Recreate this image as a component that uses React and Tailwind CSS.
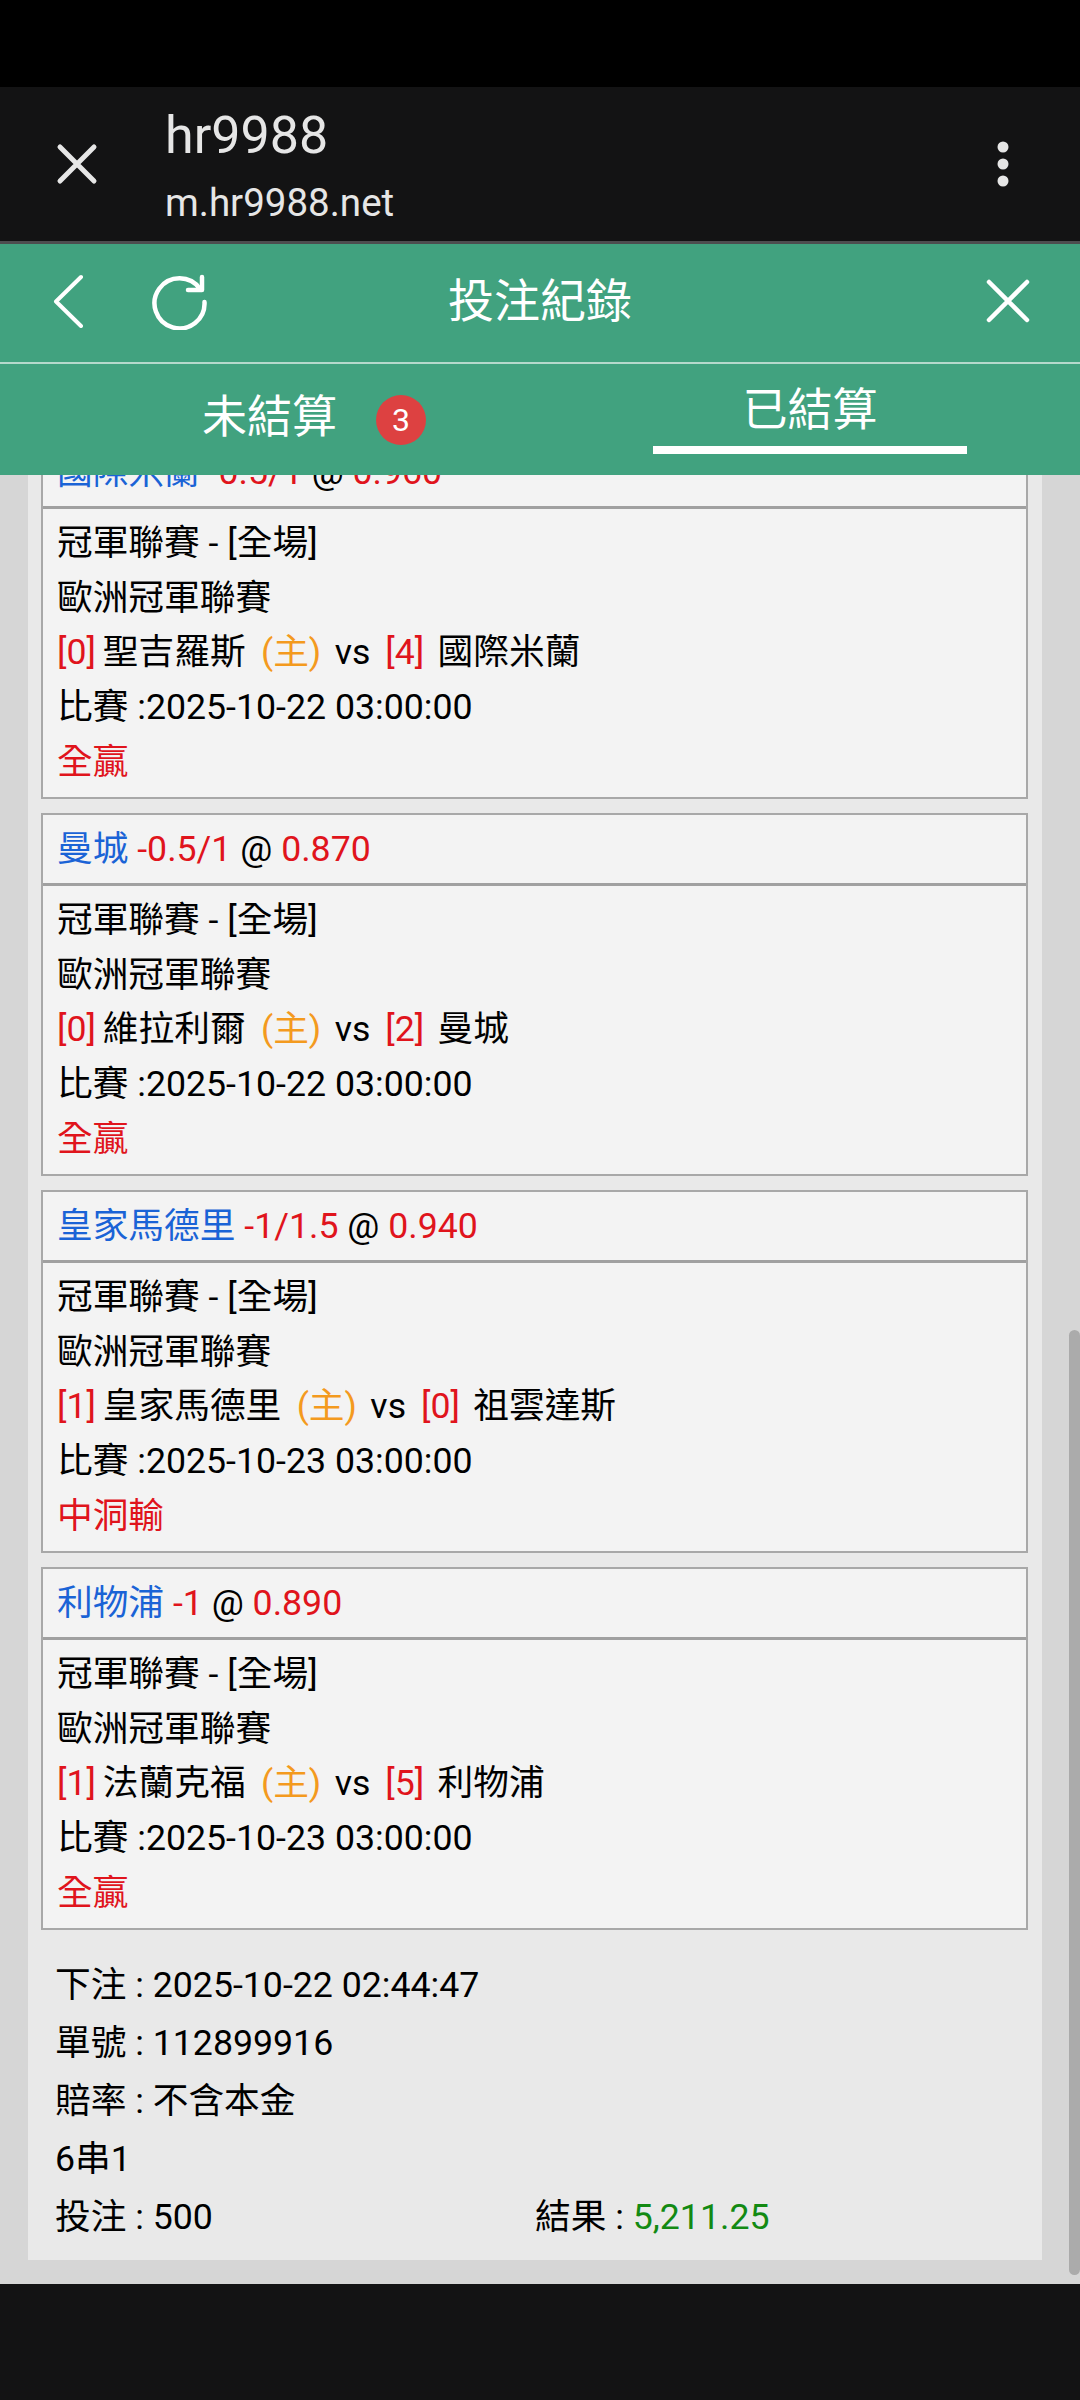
const Card = ({ team, hcp, odds, hs, h, as, a, date, result, className = "" }) => (
  <div className={`border-2 border-[#a8a8a8] bg-[#f3f3f3] ${className}`}>
    <div className="h-[71px] border-b-[3px] border-[#a0a0a0] px-[14px] pt-[7px] leading-[55px]">
      <span className="text-[#1a63d6]">{team}</span> <span className="text-[#e0141c]">{hcp}</span> @ <span className="text-[#e0141c]">{odds}</span>
    </div>
    <div className="px-[14px] pb-[7.5px] pt-[7px] leading-[54.7px]">
      <div>冠軍聯賽 - [全場]</div>
      <div>歐洲冠軍聯賽</div>
      <div>
        <span className="text-[#e0141c]">[{hs}]</span> <span className="ml-[-2px]">{h}</span> <span className="ml-[6.5px] mr-[1.5px] text-[#f39a1e]">(主)</span> <span className="ml-[3px] mr-[6px]">vs</span> <span className="mr-[4.5px] text-[#e0141c]">[{as}]</span> {a}
      </div>
      <div>比賽 :{date}</div>
      <div className="text-[#e0141c]">{result}</div>
    </div>
  </div>
);

export default function App() {
  const cards = [
    { team: "曼城", hcp: "-0.5/1", odds: "0.870", hs: 0, h: "維拉利爾", as: 2, a: "曼城", date: "2025-10-22 03:00:00", result: "全贏" },
    { team: "皇家馬德里", hcp: "-1/1.5", odds: "0.940", hs: 1, h: "皇家馬德里", as: 0, a: "祖雲達斯", date: "2025-10-23 03:00:00", result: "中洞輸" },
    { team: "利物浦", hcp: "-1", odds: "0.890", hs: 1, h: "法蘭克福", as: 5, a: "利物浦", date: "2025-10-23 03:00:00", result: "全贏" },
  ];
  return (
    <div className="flex h-[2400px] w-[1080px] flex-col overflow-hidden bg-[#131314] text-[35.7px] text-black [font-family:Roboto,'Noto_Sans_CJK_TC',sans-serif]">
      <div className="h-[87px] bg-black" />
      <div className="flex h-[157px] items-center border-b-[3px] border-[#4d4d4f] bg-[#131314] text-[#e6e6e6]">
        <svg className="ml-[56px] h-[42px] w-[42px]" viewBox="0 0 42 42" fill="none" stroke="#e6e6e6" strokeWidth="5" strokeLinecap="round">
          <path d="M4 4 38 38M38 4 4 38" />
        </svg>
        <div className="ml-[67px] flex-1 self-start pt-[16px]">
          <div className="text-[52px] leading-[66px]">hr9988</div>
          <div className="mt-[6px] text-[38.5px] leading-[56px]">m.hr9988.net</div>
        </div>
        <svg className="mr-[71px] h-[50px] w-[12px]" viewBox="0 0 12 50" fill="#e6e6e6">
          <circle cx="6" cy="8" r="5.5" />
          <circle cx="6" cy="25" r="5.5" />
          <circle cx="6" cy="42" r="5.5" />
        </svg>
      </div>
      <div className="bg-[#41a27f] text-white">
        <div className="relative flex h-[120px] items-center justify-center border-b-2 border-[#b5d9cc]">
          <span className="pb-[5px] text-[46px] leading-none">投注紀錄</span>
          <svg className="absolute left-[52px] top-[30px] h-[54px] w-[32px]" viewBox="0 0 32 54" fill="none" stroke="#fff" strokeWidth="4" strokeLinecap="round" strokeLinejoin="round">
            <path d="M29 3 4 27.5 29 52" />
          </svg>
          <svg className="absolute left-[150px] top-[30px] h-[56px] w-[58px]" viewBox="0 0 58 56" fill="none" stroke="#fff" strokeWidth="4.5" strokeLinecap="round" strokeLinejoin="round">
            <path d="M50 15A25 25 0 1 0 54.5 28" />
            <path d="M52 3V16H38" />
          </svg>
          <svg className="absolute right-[50px] top-[35px] h-[44px] w-[44px]" viewBox="0 0 44 44" fill="none" stroke="#fff" strokeWidth="4.5" strokeLinecap="round">
            <path d="M3 3 41 41M41 3 3 41" />
          </svg>
        </div>
        <div className="flex h-[111px]">
          <div className="flex w-[540px] items-center justify-center pl-[88px]">
            <span className="pb-[4px] text-[45px] leading-none">未結算</span>
            <span className="ml-[39px] flex h-[50px] w-[50px] items-center justify-center rounded-full bg-[#dd4141] text-[32px] leading-none">3</span>
          </div>
          <div className="flex w-[540px] justify-center">
            <div className="flex h-[90px] w-[314px] items-center justify-center border-b-[8px] border-white pt-[11px] text-[45px] leading-none">已結算</div>
          </div>
        </div>
      </div>
      <div className="relative h-[1809px] overflow-hidden bg-[#d6d6d6]">
        <div className="ml-[28px] mr-[38px] h-[1785px] overflow-hidden bg-[#e9e9e9] pl-[13px] pr-[14px]">
          <div className="mt-[-39px]">
            <Card team="國際米蘭" hcp="-0.5/1" odds="0.960" hs={0} h="聖吉羅斯" as={4} a="國際米蘭" date="2025-10-22 03:00:00" result="全贏" />
            {cards.map((c) => (
              <Card key={c.team} {...c} className="mt-[14px]" />
            ))}
          </div>
          <div className="mt-[26px] px-[14px] leading-[58px]">
            <div>下注 : 2025-10-22 02:44:47</div>
            <div>單號 : 112899916</div>
            <div>賠率 : 不含本金</div>
            <div>6串1</div>
            <div className="flex">
              <div className="w-[480px]">投注 : 500</div>
              <div>結果 : <span className="text-[#138a13]">5,211.25</span></div>
            </div>
          </div>
        </div>
        <div className="absolute right-0 top-[855px] h-[945px] w-[11px] rounded-[6px] bg-[#ababab]" />
      </div>
    </div>
  );
}
